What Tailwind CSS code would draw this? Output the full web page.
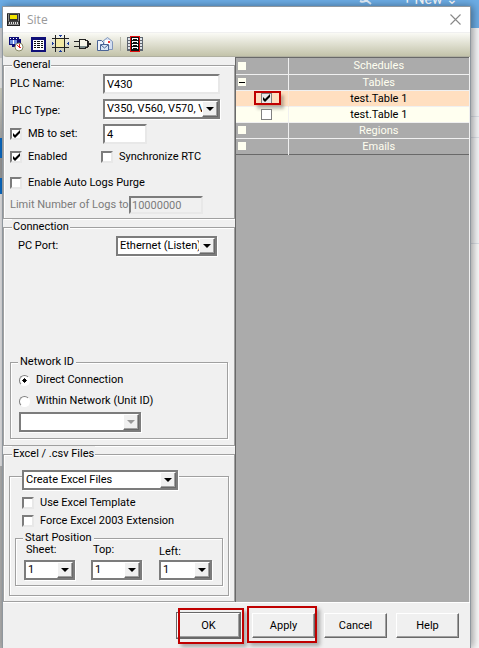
<!DOCTYPE html>
<html lang="en">
<head>
    <meta charset="UTF-8">
    <meta name="viewport" content="width=device-width, initial-scale=1.0">
    <title>Site</title>
    <script src="https://cdn.jsdelivr.net/npm/@tailwindcss/browser@4"></script>
    <style>
        body {
            font-family: Roboto, "Liberation Sans", sans-serif;
        }
        .frame {
            border: 1px solid #a0a0a0;
            box-shadow: 1px 1px #fff, inset 1px 1px #fff;
        }
        .sunken {
            border: 2px solid;
            border-color: #7c7c7c #e8e8e8 #e8e8e8 #7c7c7c;
        }
        .combo {
            border: 2px solid #7c7c7c;
            box-shadow: 1px 1px #fff;
        }
        .raised {
            border: 1px solid;
            border-color: #fff #696969 #696969 #fff;
            box-shadow: inset -1px -1px #a0a0a0;
        }
        .tick:checked + svg {
            display: block;
        }
    </style>
</head>
<body class="relative min-h-screen overflow-hidden bg-[#f5f6f8] text-[11px] leading-4 text-black">

    <!-- Desktop behind the dialog -->
    <div class="absolute inset-x-0 top-0 h-7 overflow-hidden bg-[#6cade6] text-white" aria-hidden="true">
        <svg class="absolute right-[106px] top-0" width="14" height="5" viewBox="0 0 14 5" stroke="#e4f0fb" stroke-width="2" fill="none"><path d="M1 1q4 2 6-1l5 4"/></svg>
        <span class="absolute -top-[9px] right-[21px] text-[14px]">+ New ⌄</span>
    </div>
    <div class="absolute bottom-0 left-0 top-7 flex w-[3px] flex-col" aria-hidden="true">
        <div class="h-[30px] bg-[#cfd0d4]"></div>
        <div class="h-[30px] bg-[#ececec]"></div>
        <div class="h-[50px] bg-linear-to-b from-[#d4d4c6] to-[#aaa]"></div>
        <div class="h-5 bg-[#0a6ac4]"></div>
        <div class="h-5 bg-[#9a9a9a]"></div>
        <div class="h-4 bg-[#0a6ac4]"></div>
        <div class="h-[272px] bg-[#e2e2e4]"></div>
        <div class="grow bg-[#b0b0b0]"></div>
    </div>
    <div class="absolute right-0 top-[116px] h-[22px] w-3 border-y border-[#dde1e8]" aria-hidden="true"></div>
    <div class="absolute bottom-0 right-0 top-[243px] w-3 border-t border-[#dde1e8] bg-[#fafafa]" aria-hidden="true"></div>

    <main class="relative ml-[2px] mr-2 mt-[6px] flex min-h-[calc(100vh-6px)] flex-col border-x border-t border-[#8f979e] bg-[#f0f0f0] shadow-[2px_0_8px_rgba(0,0,0,0.4)]">

        <!-- Title bar -->
        <header class="flex h-[25px] items-center bg-white pl-1 pr-[9px]">
            <svg width="14" height="14" viewBox="0 0 14 14" shape-rendering="crispEdges">
                <path fill="#555" d="M0 0h13v1H0z"/>
                <path fill="#222" d="M0 1h13v12H0z"/>
                <path fill="#8a8a8a" d="M1 1h11v11H1z"/>
                <path fill="#333" d="M2 1h9v7H2z"/>
                <path fill="#f0e400" d="M3 2h7v4H3z"/>
                <path fill="#444" d="M1 8h11v3H1z"/>
                <path fill="#ddd" d="M2 9h1v2H2zM4 9h1v2H4zM6 9h1v2H6zM8 9h1v2H8zM10 9h1v2h-1z"/>
            </svg>
            <h1 class="ml-[6px] grow font-[Open_Sans] text-[12px] text-[#999]">Site</h1>
            <button type="button" aria-label="Close">
                <svg width="11" height="11" viewBox="0 0 11 11" stroke="#888" stroke-width="1.1"><path d="M.5 .5l10 10M10.500 .5l-10 10"/></svg>
            </button>
        </header>

        <!-- Toolbar -->
        <div class="mt-px flex h-6 shrink-0 items-center rounded-l-sm border-b border-[#b0b0a0] bg-linear-to-b from-[#fafaf5] to-[#c3c3aa] pb-[2px] pl-[6px]">
            <button type="button" aria-label="Schedules">
                <svg width="15" height="16" viewBox="0 0 15 16" shape-rendering="crispEdges">
                    <path fill="#101078" d="M0 1h10v2h2v6h-2v2H3V9H0z"/>
                    <path fill="#6f8fe0" d="M1 4h7v4H1z"/>
                    <path fill="#fff" d="M1 2h1v1H1zM4 2h1v1H4zM7 2h1v1H7zM4 4h1v4H4z"/>
                    <circle cx="10" cy="11" r="4" fill="#fff" stroke="#886" stroke-width="1" shape-rendering="auto"/>
                    <path fill="none" stroke="#e02020" d="M8 9l2.500 2.500V8M10 11l2 1"/>
                </svg>
            </button>
            <button type="button" aria-label="Tables" class="ml-[7px]">
                <svg width="15" height="16" viewBox="0 0 15 16" shape-rendering="crispEdges">
                    <path fill="#101078" d="M0 1h15v15H0z"/>
                    <path fill="#fff" d="M2 4h11v10H2z"/>
                    <path fill="#111" d="M3 5h2v1H3zM6 5h3v1H6zM10 5h2v1h-2zM3 7h2v1H3zM6 7h3v1H6zM10 7h2v1h-2zM3 9h2v1H3zM6 9h3v1H6zM10 9h2v1h-2zM3 11h2v1H3zM6 11h3v1H6zM10 11h2v1h-2z"/>
                </svg>
            </button>
            <button type="button" aria-label="Regions" class="ml-[6px]">
                <svg width="17" height="17" viewBox="0 0 17 17" shape-rendering="crispEdges">
                    <path fill="#f3e9a4" d="M4 4h9v9H4z"/>
                    <path fill="#222" d="M3 0h1v17H3zM12 0h1v17h-1zM0 3h17v1H0zM0 12h17v1H0z"/>
                    <path fill="#1c3c9c" d="M7 0h3v1H9v1H8V1H7zM8 15h1v1h1v1H7v-1h1zM0 7h1v1h1v1H1v1H0zM16 7h1v3h-1V9h-1V8h1z"/>
                </svg>
            </button>
            <button type="button" aria-label="Connections" class="ml-[5px]">
                <svg width="17" height="12" viewBox="0 0 17 12" shape-rendering="crispEdges">
                    <path fill="#222" d="M0 3h6v1H0zM0 8h6v1H0zM15 5h2v2h-2zM5 1h7v1h2v1h1v6h-1v1h-2v1H5z"/>
                    <path fill="#f5f5ea" d="M6 2h5v1h2v5H6z"/>
                    <path fill="#7a8a8a" d="M6 8h7v1h-2v1H6z"/>
                </svg>
            </button>
            <button type="button" aria-label="Emails" class="ml-[6px]">
                <svg width="16" height="16" viewBox="0 0 16 16">
                    <path fill="#d3dff2" stroke="#8296ba" d="M5.500 5.500l5-4 5 4v8h-10z"/>
                    <path fill="#fff" d="M8 4h5v5H8z"/>
                    <path fill="#e33" d="M11 5h2v2h-2z"/>
                    <path fill="#eef3fb" stroke="#4a6496" d="M.5 4.500h4l2 2v8h-6z"/>
                    <path fill="#dce6f5" stroke="#4a6496" d="M3.500 8.500h8v6h-8z"/>
                    <path fill="none" stroke="#4a6496" d="M4 9l3.500 3L11 9"/>
                </svg>
            </button>
            <span class="ml-[7px] h-[14px] w-px bg-[#b8b8a8]"></span>
            <button type="button" aria-label="Properties" class="ml-[6px]">
                <svg width="16" height="16" viewBox="0 0 16 16" shape-rendering="crispEdges">
                    <path fill="#5e6670" d="M0 1h16v14H0z"/>
                    <path fill="#dfe5ea" d="M1 2h2v2H1zM1 5h2v2H1zM1 8h2v2H1zM1 11h2v2H1zM13 2h2v2h-2zM13 5h2v2h-2zM13 8h2v2h-2zM13 11h2v2h-2z"/>
                    <path fill="#e01010" d="M3 0h10v16H3z"/>
                    <path fill="#111" d="M4 1h8v14H4z"/>
                    <path fill="#fff" d="M5 2h6v2H5zM5 5h6v2H5zM5 8h6v2H5zM5 11h6v2H5z"/>
                    <path fill="#111" d="M6 3h4v1H6zM6 6h4v1H6zM6 9h4v1H6zM6 12h4v1H6z"/>
                </svg>
            </button>
        </div>

        <div class="flex h-[546px] shrink-0 border-b border-white">

            <!-- Settings -->
            <form class="w-[232px] shrink-0 whitespace-nowrap">
                <fieldset class="frame h-[162px] px-[6px]">
                    <legend class="ml-[2px] bg-[#f0f0f0] px-px">General</legend>
                    <div class="flex h-[22px] items-center">
                        <label for="plc-name" class="w-[93px]">PLC Name:</label>
                        <input id="plc-name" type="text" value="V430" class="sunken h-5 w-[117px] bg-white px-[2px]">
                    </div>
                    <div class="mt-[3px] flex h-[22px] items-center">
                        <label for="plc-type" class="w-[93px] pl-[2px] pt-1">PLC Type:</label>
                        <div class="combo relative h-5 w-[117px] bg-white">
                            <select id="plc-type" class="block h-4 w-full appearance-none overflow-hidden pl-[2px] outline-none"><option>V350, V560, V570, V1040</option></select>
                            <svg class="raised pointer-events-none absolute right-0 top-0 h-4 w-4 bg-[#f0f0f0]" viewBox="0 0 14 14"><path d="M3 5h8l-4 4z"/></svg>
                        </div>
                    </div>
                    <div class="mt-[3px] flex h-[22px] items-center">
                        <label class="flex w-[93px] items-center gap-[6px]">
                            <span class="sunken relative size-3 bg-white">
                                <input type="checkbox" checked class="tick absolute inset-0 appearance-none">
                                <svg class="pointer-events-none absolute inset-0 hidden" width="9" height="9" viewBox="0 0 9 9"><path d="M1 3v3l2 2 5-5V0L3 5z"/></svg>
                            </span>
                            MB to set:
                        </label>
                        <input type="text" value="4" aria-label="MB to set" class="sunken h-5 w-11 bg-white px-[2px]">
                    </div>
                    <div class="mt-px flex h-[22px] items-center">
                        <label class="flex w-[91px] items-center gap-[6px]">
                            <span class="sunken relative size-3 bg-white">
                                <input type="checkbox" checked class="tick absolute inset-0 appearance-none">
                                <svg class="pointer-events-none absolute inset-0 hidden" width="9" height="9" viewBox="0 0 9 9"><path d="M1 3v3l2 2 5-5V0L3 5z"/></svg>
                            </span>
                            Enabled
                        </label>
                        <label class="flex items-center gap-[6px]">
                            <span class="sunken relative size-3 bg-white">
                                <input type="checkbox" class="tick absolute inset-0 appearance-none">
                                <svg class="pointer-events-none absolute inset-0 hidden" width="9" height="9" viewBox="0 0 9 9"><path d="M1 3v3l2 2 5-5V0L3 5z"/></svg>
                            </span>
                            Synchronize RTC
                        </label>
                    </div>
                    <div class="mt-1 flex h-[22px] items-center">
                        <label class="flex items-center gap-[6px]">
                            <span class="sunken relative size-3 bg-white">
                                <input type="checkbox" class="tick absolute inset-0 appearance-none">
                                <svg class="pointer-events-none absolute inset-0 hidden" width="9" height="9" viewBox="0 0 9 9"><path d="M1 3v3l2 2 5-5V0L3 5z"/></svg>
                            </span>
                            Enable Auto Logs Purge
                        </label>
                    </div>
                    <div class="flex h-[22px] items-center text-[#7b7b7b]">
                        <label for="log-limit" class="w-[119px]">Limit Number of Logs to</label>
                        <input id="log-limit" type="text" value="10000000" disabled class="sunken h-[18px] w-[74px] px-px">
                    </div>
                </fieldset>

                <fieldset class="frame h-[227px] px-[6px]">
                    <legend class="ml-[2px] bg-[#f0f0f0] px-px">Connection</legend>
                    <div class="flex h-[22px] items-center">
                        <label for="pc-port" class="w-[106px] pl-2">PC Port:</label>
                        <div class="combo relative h-5 w-[101px] bg-white">
                            <select id="pc-port" class="block h-4 w-full appearance-none overflow-hidden pl-[2px] outline-none"><option>Ethernet (Listen)</option></select>
                            <svg class="raised pointer-events-none absolute right-0 top-0 h-4 w-4 bg-[#f0f0f0]" viewBox="0 0 14 14"><path d="M3 5h8l-4 4z"/></svg>
                        </div>
                    </div>
                    <fieldset class="frame mt-[97px] h-[85px] px-2">
                        <legend class="-ml-px bg-[#f0f0f0] px-[2px]">Network ID</legend>
                        <label class="flex h-5 items-center gap-[6px]">
                            <input type="radio" name="network" checked class="size-[11px] appearance-none rounded-full border border-[#808080] border-b-white border-r-white bg-white bg-radial from-black from-30% to-white to-35%">
                            Direct Connection
                        </label>
                        <label class="flex h-[22px] items-center gap-[6px]">
                            <input type="radio" name="network" class="size-[11px] appearance-none rounded-full border border-[#808080] border-b-white border-r-white bg-white">
                            Within Network (Unit ID)
                        </label>
                        <div class="combo relative h-5 w-[122px] bg-white">
                            <select aria-label="Unit ID" disabled class="block h-4 w-full appearance-none pl-[2px] outline-none"></select>
                            <svg class="raised pointer-events-none absolute right-0 top-0 h-4 w-4 bg-[#f0f0f0]" viewBox="0 0 14 14" fill="#999"><path d="M3 5h8l-4 4z"/></svg>
                        </div>
                    </fieldset>
                </fieldset>

                <fieldset class="frame h-[156px] px-[5px]">
                    <legend class="ml-[3px] bg-[#f0f0f0] px-px">Excel / .csv Files</legend>
                    <div class="frame mt-[14px] h-[120px] px-[5px]">
                        <div class="-mt-[7px] ml-[7px] w-[157px] bg-[#f0f0f0] pr-px">
                            <div class="combo relative h-5 bg-white">
                                <select aria-label="Excel / .csv Files" class="block h-4 w-full appearance-none pl-[2px] outline-none"><option>Create Excel Files</option></select>
                                <svg class="raised pointer-events-none absolute right-0 top-0 h-4 w-4 bg-[#f0f0f0]" viewBox="0 0 14 14"><path d="M3 5h8l-4 4z"/></svg>
                            </div>
                        </div>
                        <label class="ml-[7px] mt-1 flex h-[18px] items-center gap-[6px]">
                            <span class="sunken relative size-3 bg-white">
                                <input type="checkbox" class="tick absolute inset-0 appearance-none">
                                <svg class="pointer-events-none absolute inset-0 hidden" width="9" height="9" viewBox="0 0 9 9"><path d="M1 3v3l2 2 5-5V0L3 5z"/></svg>
                            </span>
                            Use Excel Template
                        </label>
                        <label class="ml-[7px] flex h-[18px] items-center gap-[6px]">
                            <span class="sunken relative size-3 bg-white">
                                <input type="checkbox" class="tick absolute inset-0 appearance-none">
                                <svg class="pointer-events-none absolute inset-0 hidden" width="9" height="9" viewBox="0 0 9 9"><path d="M1 3v3l2 2 5-5V0L3 5z"/></svg>
                            </span>
                            Force Excel 2003 Extension
                        </label>
                        <fieldset class="frame h-[56px] px-2">
                            <legend class="-ml-px bg-[#f0f0f0] px-[2px]">Start Position</legend>
                            <div class="-mt-1 flex">
                                <div class="w-[67px]">
                                    <label for="sheet" class="block h-[18px] pl-[2px]">Sheet:</label>
                                    <div class="combo relative h-5 w-[51px] bg-white">
                                        <select id="sheet" class="block h-4 w-full appearance-none pl-[2px] outline-none"><option>1</option></select>
                                        <svg class="raised pointer-events-none absolute right-0 top-0 h-4 w-4 bg-[#f0f0f0]" viewBox="0 0 14 14"><path d="M3 5h8l-4 4z"/></svg>
                                    </div>
                                </div>
                                <div class="w-[68px]">
                                    <label for="top" class="block h-[18px] pl-[2px]">Top:</label>
                                    <div class="combo relative h-5 w-[51px] bg-white">
                                        <select id="top" class="block h-4 w-full appearance-none pl-[2px] outline-none"><option>1</option></select>
                                        <svg class="raised pointer-events-none absolute right-0 top-0 h-4 w-4 bg-[#f0f0f0]" viewBox="0 0 14 14"><path d="M3 5h8l-4 4z"/></svg>
                                    </div>
                                </div>
                                <div>
                                    <label for="left" class="block h-[18px] pt-[2px]">Left:</label>
                                    <div class="combo relative h-5 w-[53px] bg-white">
                                        <select id="left" class="block h-4 w-full appearance-none pl-[2px] outline-none"><option>1</option></select>
                                        <svg class="raised pointer-events-none absolute right-0 top-0 h-4 w-4 bg-[#f0f0f0]" viewBox="0 0 14 14"><path d="M3 5h8l-4 4z"/></svg>
                                    </div>
                                </div>
                            </div>
                        </fieldset>
                    </div>
                </fieldset>
            </form>

            <!-- Selection list -->
            <div class="mr-px grow border-l border-t border-[#696969] bg-[#ababab]">
                <table class="w-full table-fixed border-collapse border-b border-[#696969] text-center text-[#fffff0]">
                    <tbody>
                        <tr class="h-4 border-b border-[#f0f0f0]">
                            <td class="w-[52px] border-r border-[#f0f0f0] p-0"><button type="button" aria-label="Expand Schedules" class="ml-[2px] block size-2 bg-[#fffff0]"></button></td>
                            <td class="p-0 leading-[15px]">Schedules</td>
                        </tr>
                        <tr class="h-4 border-b border-[#f0f0f0]">
                            <td class="border-r border-[#f0f0f0] p-0"><button type="button" aria-label="Collapse Tables" class="ml-[2px] flex size-2 items-center justify-center bg-[#fffff0]"><span class="h-px w-[6px] bg-black"></span></button></td>
                            <td class="p-0 leading-[15px]">Tables</td>
                        </tr>
                        <tr class="h-4 border-b border-[#f0f0f0] bg-[#ffdfc0] text-black">
                            <td class="border-r border-[#f7e4d2] p-0">
                                <div class="relative ml-[25px] size-[11px] border border-[#808080] bg-[#e8e8e8]">
                                    <input type="checkbox" checked aria-label="test.Table 1" class="tick absolute inset-0 appearance-none">
                                    <svg class="pointer-events-none absolute inset-0 hidden" width="9" height="9" viewBox="0 0 9 9"><path d="M1 3v3l2 2 5-5V0L3 5z"/></svg>
                                    <span class="pointer-events-none absolute -left-[8px] -top-[3px] h-[14px] w-[27px] border-2 border-[#c00000] shadow-[3px_4px_3px_rgba(0,0,0,0.25)]"></span>
                                </div>
                            </td>
                            <td class="p-0 leading-[15px]">test.Table 1</td>
                        </tr>
                        <tr class="h-4 border-b border-[#f0f0f0] bg-[#fffff0] text-black">
                            <td class="border-r border-[#f0f0f0] p-0">
                                <div class="relative ml-[25px] size-[11px] border border-[#808080] bg-white">
                                    <input type="checkbox" aria-label="test.Table 1" class="tick absolute inset-0 appearance-none">
                                    <svg class="pointer-events-none absolute inset-0 hidden" width="9" height="9" viewBox="0 0 9 9"><path d="M1 3v3l2 2 5-5V0L3 5z"/></svg>
                                </div>
                            </td>
                            <td class="p-0 leading-[15px]">test.Table 1</td>
                        </tr>
                        <tr class="h-4 border-b border-[#f0f0f0]">
                            <td class="border-r border-[#f0f0f0] p-0"><button type="button" aria-label="Expand Regions" class="ml-[2px] block size-2 bg-[#fffff0]"></button></td>
                            <td class="p-0 leading-[15px]">Regions</td>
                        </tr>
                        <tr class="h-4">
                            <td class="border-r border-[#f0f0f0] p-0"><button type="button" aria-label="Expand Emails" class="ml-[2px] block size-2 bg-[#fffff0]"></button></td>
                            <td class="p-0 leading-[15px]">Emails</td>
                        </tr>
                    </tbody>
                </table>
            </div>
        </div>

        <!-- Dialog buttons, the first two are highlighted -->
        <footer class="flex justify-end gap-[9px] pr-[11px] pt-[10px]">
            <div class="relative mr-[3px]">
                <button type="submit" class="raised h-[25px] w-[63px] outline outline-[#696969]">OK</button>
                <span class="pointer-events-none absolute -right-1 -top-[5px] left-px h-9 border-2 border-[#c00000] shadow-[3px_3px_4px_rgba(0,0,0,0.3)]"></span>
            </div>
            <div class="relative">
                <button type="button" class="raised h-[25px] w-[63px]">Apply</button>
                <span class="pointer-events-none absolute -left-[5px] -right-[2px] -top-[7px] h-[37px] border-2 border-[#c00000] shadow-[3px_3px_4px_rgba(0,0,0,0.3)]"></span>
            </div>
            <button type="button" class="raised h-[25px] w-[63px]">Cancel</button>
            <button type="button" class="raised h-[25px] w-[63px]">Help</button>
        </footer>
    </main>

</body>
</html>
